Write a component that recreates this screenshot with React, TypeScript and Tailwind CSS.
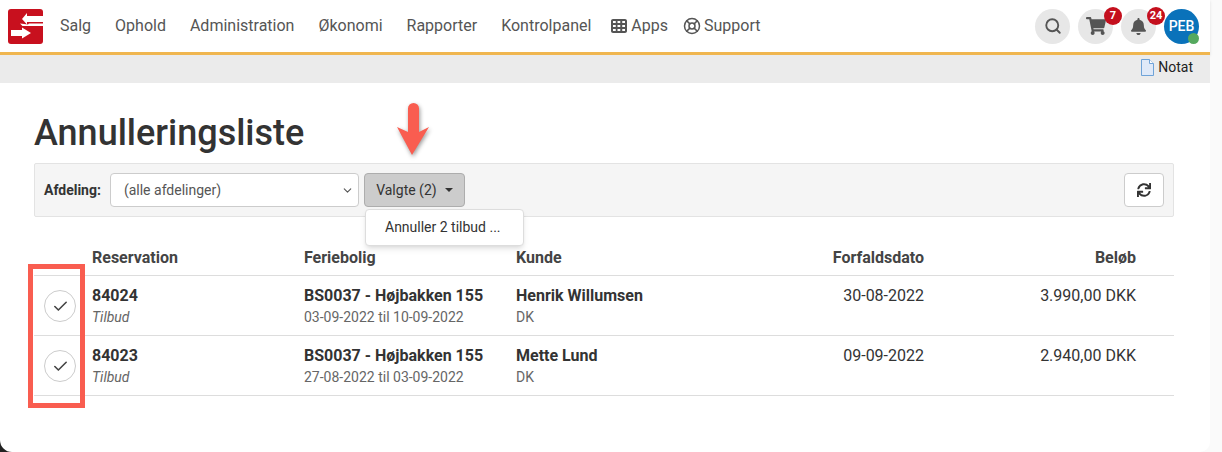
import React from "react";
import { Search, LifeBuoy, Check, ChevronDown } from "lucide-react";
import { FaBell, FaShoppingCart, FaSync } from "react-icons/fa";
import { FaTableCells } from "react-icons/fa6";

const menu = ["Salg", "Ophold", "Administration", "Økonomi", "Rapporter", "Kontrolpanel"];

const rows = [
  { id: "84024", house: "BS0037 - Højbakken 155", dates: "03-09-2022 til 10-09-2022", name: "Henrik Willumsen", due: "30-08-2022", amount: "3.990,00 DKK" },
  { id: "84023", house: "BS0037 - Højbakken 155", dates: "27-08-2022 til 03-09-2022", name: "Mette Lund", due: "09-09-2022", amount: "2.940,00 DKK" },
];

const Logo = () => (
  <svg width="35" height="35" viewBox="0 0 35 35">
    <rect width="35" height="35" rx="3" fill="#c8101e" />
    <path d="M35 7H19V4L14 10L19 15.500V13H35Z" fill="#fff" />
    <path d="M3 21H14V18.500L23 24L14 29.500V27H3Z" fill="#fff" />
    <path d="M12 14.500L14.500 17H35V14.500H21L20 15.500Z" fill="#fff" />
  </svg>
);

const RoundIcon = ({ children, badge }: { children: React.ReactNode; badge?: string }) => (
  <div className="relative w-[35px] h-[35px] rounded-full bg-[#e7e7e7] flex items-center justify-center">
    {children}
    {badge && (
      <span className="absolute -top-[2px] left-[26px] w-[18px] h-[18px] rounded-full bg-[#c40f1d] text-white text-[11px] font-bold leading-[18px] text-center">
        {badge}
      </span>
    )}
  </div>
);

export default function App() {
  return (
    <div className="relative w-[1222px] h-[452px] overflow-hidden bg-[#fafafa] font-['Roboto',sans-serif] text-[#333]">
      <div className="w-[1210px] h-full bg-white rounded-br-[10px]">
        <nav className="h-[55px] border-b-[3px] border-[#f0b64f] flex items-center pl-[8px] pr-[11px] shadow-sm">
          <Logo />
          <div className="flex items-center gap-6 ml-[17px] text-[16px] text-[#555]">
            {menu.map((m) => (
              <span key={m}>{m}</span>
            ))}
          </div>
          <div className="flex items-center ml-[20px] text-[16px] text-[#555]">
            <FaTableCells className="w-[16px] h-[16px] mr-[4px]" />
            <span>Apps</span>
            <LifeBuoy className="w-[18px] h-[18px] ml-[15px] mr-[3px]" strokeWidth={2} />
            <span>Support</span>
          </div>
          <div className="flex items-center gap-[8px] ml-auto">
            <RoundIcon>
              <Search className="w-[18px] h-[18px] text-[#555]" strokeWidth={2.5} />
            </RoundIcon>
            <RoundIcon badge="7">
              <FaShoppingCart className="w-[20px] h-[20px] text-[#555]" />
            </RoundIcon>
            <RoundIcon badge="24">
              <FaBell className="w-[17px] h-[17px] text-[#555]" />
            </RoundIcon>
            <div className="relative w-[35px] h-[35px] rounded-full bg-[#0a72ba] text-white text-[14px] font-medium flex items-center justify-center">
              PEB
              <span className="absolute right-0 bottom-0 w-[11px] h-[11px] rounded-full bg-[#55a95f]" />
            </div>
          </div>
        </nav>
        <div className="h-[28px] bg-[#ebebeb] flex items-start justify-end pr-[17px] pt-[2px]">
          <span className="flex items-center text-[14px] text-[#222]">
            <svg width="13" height="17" viewBox="0 0 13 17" className="mr-[4px]">
              <path d="M.5.5H8.500L12.500 4.500V16.500H.5Z" fill="#dfe9f8" stroke="#6fa3d8" />
              <path d="M8.500.5V4.500H12.500" fill="#fff" stroke="#6fa3d8" />
            </svg>
            Notat
          </span>
        </div>
        <div className="px-[34px] w-[1174px] box-content">
          <h1 className="text-[36px] leading-[42px] font-medium mt-[29px] text-[#333]">Annulleringsliste</h1>
          <div className="w-[1140px] h-[54px] mt-[9px] bg-[#f5f5f5] border border-[#e3e3e3] rounded-[2px] flex items-center pl-[9px] pr-[9px]">
            <span className="text-[14px] font-bold text-[#333]">Afdeling:</span>
            <div className="w-[249px] h-[34px] ml-[9px] bg-white border border-[#ccc] rounded-[4px] flex items-center justify-between pl-[13px] pr-[4px] text-[14px] text-[#555]">
              (alle afdelinger)
              <ChevronDown className="w-[13px] h-[13px]" />
            </div>
            <div className="w-[101px] h-[34px] ml-[5px] bg-[#ccc] border border-[#adadad] rounded-[4px] flex items-center justify-center text-[14px] text-[#333]">
              Valgte (2)
              <span className="ml-[8px] border-x-[4px] border-x-transparent border-t-[4px] border-t-[#333]" />
            </div>
            <div className="ml-auto w-[40px] h-[34px] bg-white border border-[#ccc] rounded-[4px] flex items-center justify-center">
              <FaSync className="w-[14px] h-[14px] text-[#333]" />
            </div>
          </div>
          <div className="mt-[23px] w-[1140px] text-[16px]">
            <div className="grid grid-cols-[58px_212px_212px_196px_212px_212px] h-[36px] items-center border-b border-[#ddd] font-bold text-[#444]">
              <span />
              <span>Reservation</span>
              <span>Feriebolig</span>
              <span>Kunde</span>
              <span className="text-right">Forfaldsdato</span>
              <span className="text-right">Beløb</span>
            </div>
            {rows.map((r) => (
              <div key={r.id} className="grid grid-cols-[58px_212px_212px_196px_212px_212px] h-[60px] border-b border-[#ddd] pt-[10px]">
                <div className="pl-[10px] pt-[4px]">
                  <div className="w-[32px] h-[32px] rounded-full border border-[#ccc] flex items-center justify-center">
                    <Check className="w-[17px] h-[17px] text-[#444]" strokeWidth={2.25} />
                  </div>
                </div>
                <div>
                  <div className="font-bold leading-[20px]">{r.id}</div>
                  <div className="italic text-[14px] text-[#666] leading-[22px]">Tilbud</div>
                </div>
                <div>
                  <div className="font-bold leading-[20px]">{r.house}</div>
                  <div className="text-[14px] text-[#666] leading-[22px]">{r.dates}</div>
                </div>
                <div>
                  <div className="font-bold leading-[20px]">{r.name}</div>
                  <div className="text-[14px] text-[#666] leading-[22px]">DK</div>
                </div>
                <div className="text-right leading-[20px]">{r.due}</div>
                <div className="text-right leading-[20px]">{r.amount}</div>
              </div>
            ))}
          </div>
        </div>
      </div>
      {/* dropdown and annotations on top of the screenshot */}
      <div className="absolute left-[365px] top-[209px] w-[159px] h-[37px] bg-white border border-[#ddd] rounded-[4px] shadow-md flex items-center pl-[19px] text-[14px] text-[#333]">
        Annuller 2 tilbud ...
      </div>
      <div className="absolute left-[28px] top-[264px] w-[57px] h-[144px] border-[5px] border-[#f95d50]" />
      <svg className="absolute left-[395px] top-[100px] drop-shadow-[1px_2px_2px_rgba(0,0,0,0.4)]" width="36" height="58" viewBox="0 0 36 58">
        <path d="M13 8.500a5.500 5.500 0 0 1 11 0V32L34 27L17 55L2 27L13 32Z" fill="#f95d50" />
      </svg>
      {/* window corner */}
      <svg className="absolute left-0 bottom-0" width="12" height="12" viewBox="0 0 12 12">
        <path d="M0 0V12H12A12 12 0 0 1 0 0Z" fill="#222" />
      </svg>
    </div>
  );
}
